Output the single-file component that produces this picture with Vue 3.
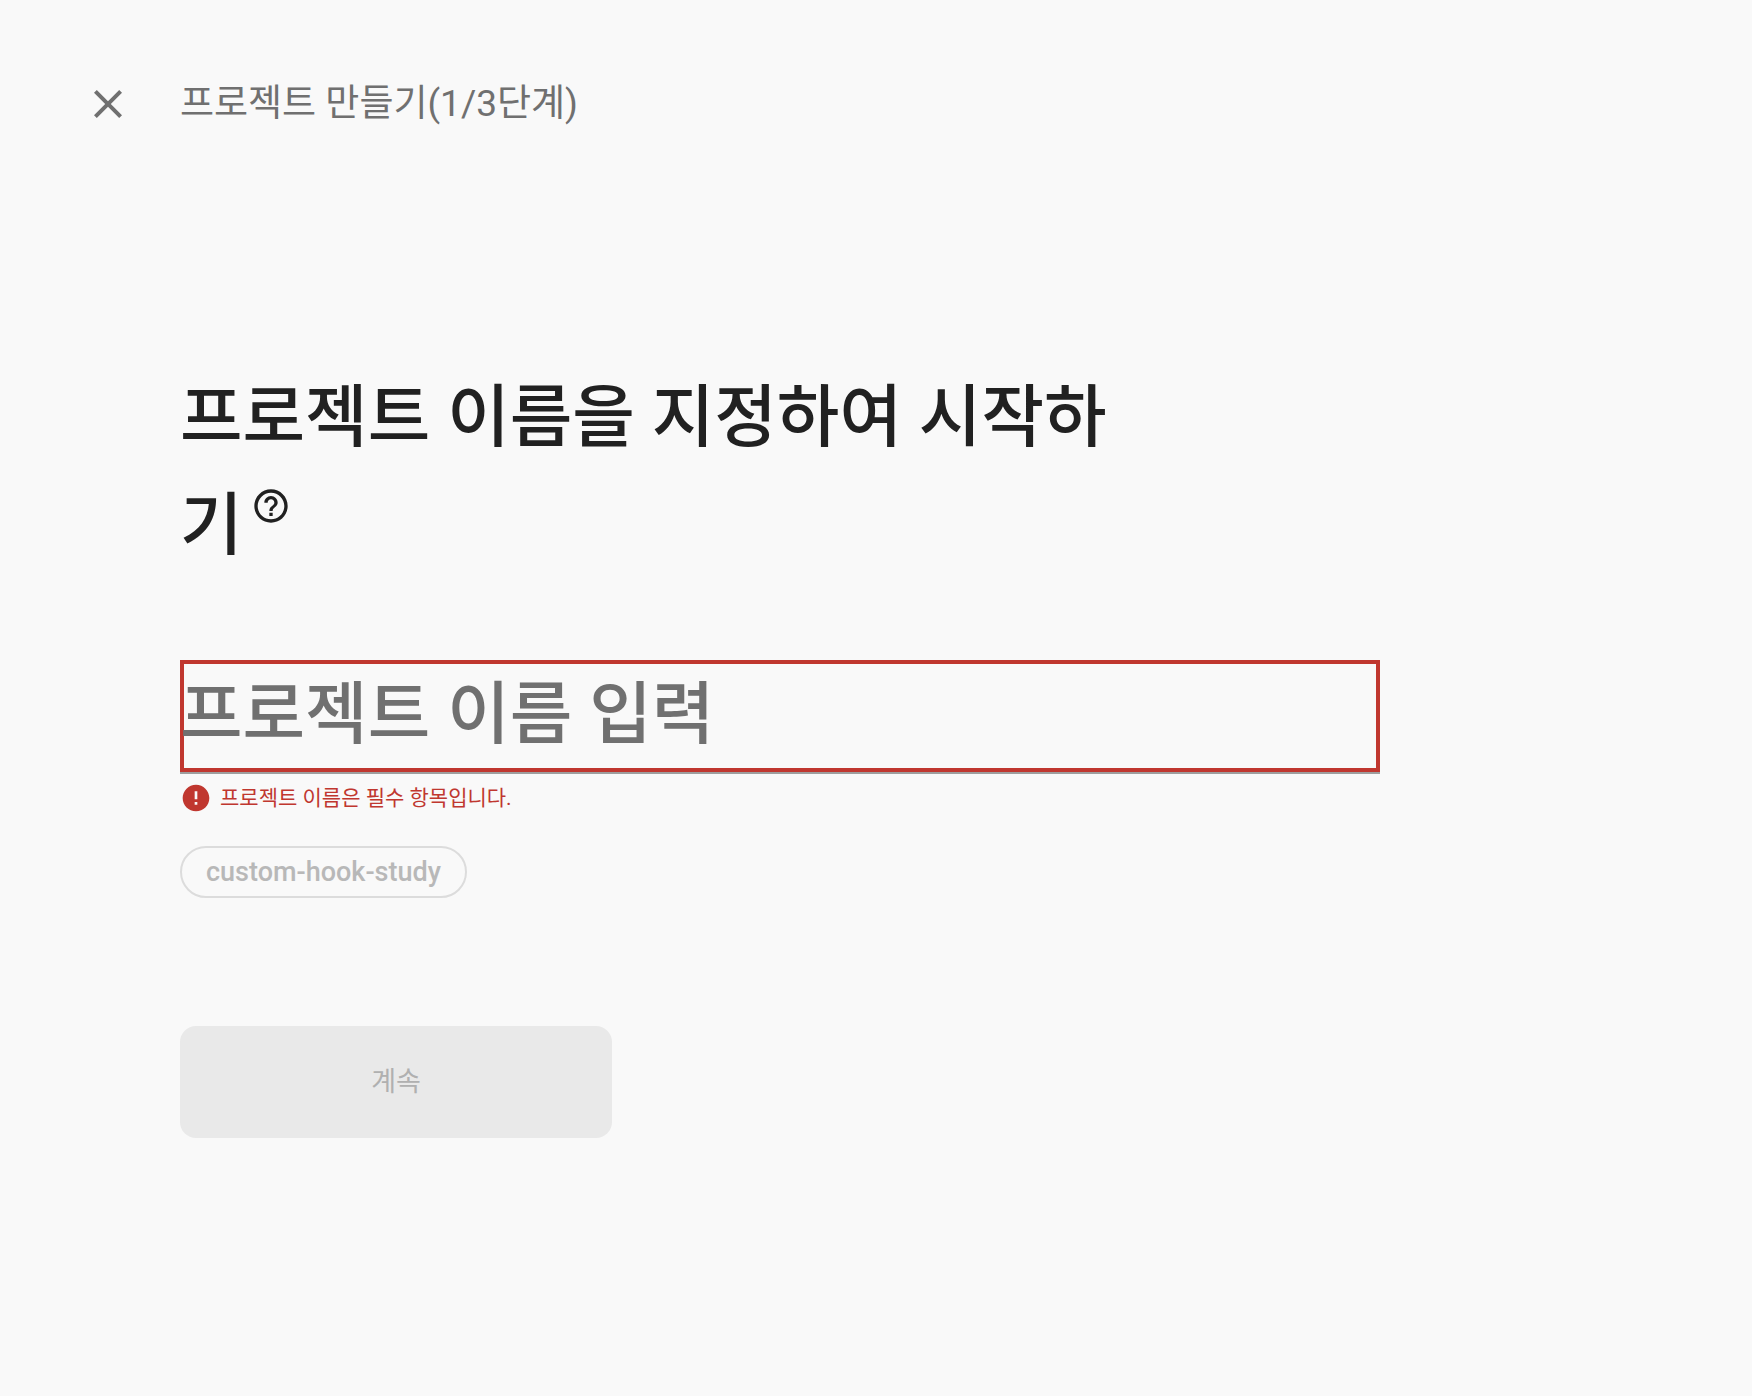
<script setup>
import { ref, computed } from 'vue'

const projectName = ref('')
const step = ref(1)
const totalSteps = 3
const projectId = 'custom-hook-study'

// 이름이 비어 있으면 오류 상태
const hasError = computed(() => projectName.value.trim() === '')
</script>

<template>
  <div class="create-project">
    <header class="top-bar">
      <button class="icon-button" type="button" aria-label="닫기">
        <svg class="close-icon" viewBox="0 0 24 24">
          <path d="M19 6.41L17.59 5 12 10.59 6.41 5 5 6.41 10.59 12 5 17.59 6.41 19 12 13.41 17.59 19 19 17.59 13.41 12z" />
        </svg>
      </button>
      <span class="top-title">프로젝트 만들기({{ step }}/{{ totalSteps }}단계)</span>
    </header>

    <main class="content">
      <h1 class="heading">
        프로젝트 이름을 지정하여 시작하기<button class="help-button" type="button" aria-label="도움말">
          <svg class="help-icon" viewBox="0 0 24 24">
            <path d="M11 18h2v-2h-2v2zm1-16C6.48 2 2 6.48 2 12s4.48 10 10 10 10-4.48 10-10S17.52 2 12 2zm0 18c-4.41 0-8-3.59-8-8s3.59-8 8-8 8 3.59 8 8-3.59 8-8 8zm0-14c-2.21 0-4 1.79-4 4h2c0-1.1.9-2 2-2s2 .9 2 2c0 2-3 1.75-3 5h2c0-2.25 3-2.5 3-5 0-2.21-1.79-4-4-4z" />
          </svg>
        </button>
      </h1>

      <form class="form" @submit.prevent>
        <input
          v-model="projectName"
          class="name-input"
          :class="{ 'has-error': hasError }"
          type="text"
          placeholder="프로젝트 이름 입력"
          aria-label="프로젝트 이름 입력"
          aria-describedby="name-error"
        />
        <p id="name-error" class="error" :class="{ hidden: !hasError }">
          <svg class="error-icon" viewBox="0 0 24 24">
            <path d="M12 2C6.48 2 2 6.48 2 12s4.48 10 10 10 10-4.48 10-10S17.52 2 12 2zm1 15h-2v-2h2v2zm0-4h-2V7h2v6z" />
          </svg>
          <span>프로젝트 이름은 필수 항목입니다.</span>
        </p>
        <button class="id-chip" type="button" disabled>{{ projectId }}</button>
        <button class="submit" type="submit" :disabled="hasError">계속</button>
      </form>
    </main>
  </div>
</template>

<style>
body {
  margin: 0;
  background: #f9f9f9;
}
</style>

<style scoped>
.create-project {
  box-sizing: border-box;
  min-height: 100vh;
  padding: 72px 76px;
  background: #f9f9f9;
  color: #212121;
  font-family: Roboto, 'Noto Sans CJK KR', sans-serif;
}

button {
  padding: 0;
  border: none;
  background: none;
  color: inherit;
  font-family: inherit;
}

svg {
  display: block;
  fill: currentColor;
}

/* 상단 바 */
.top-bar {
  display: flex;
  align-items: center;
  gap: 40px;
  height: 64px;
  color: #707070;
}

.icon-button {
  padding: 8px;
  cursor: pointer;
}

.close-icon {
  width: 48px;
  height: 48px;
}

.top-title {
  font-size: 37px;
  line-height: 64px;
}

/* 본문 */
.content {
  max-width: 1200px;
  margin-left: 104px;
}

.heading {
  max-width: 960px;
  margin: 228px 0 80px;
  font-size: 68px;
  font-weight: 500;
  line-height: 108px;
  word-break: break-all;
}

.help-button {
  margin-left: 8px;
  vertical-align: 23px;
  cursor: pointer;
}

.help-icon {
  width: 40px;
  height: 40px;
}

.form {
  display: flex;
  flex-direction: column;
  align-items: flex-start;
}

.name-input {
  box-sizing: border-box;
  width: 100%;
  height: 114px;
  padding: 0 0 2px;
  border: none;
  border-bottom: 2px solid #9e9e9e;
  border-radius: 0;
  outline: none;
  background: transparent;
  color: #212121;
  font-family: inherit;
  font-size: 68px;
  font-weight: 500;
}

.name-input::placeholder {
  color: #707070;
  opacity: 1;
}

.name-input.has-error {
  box-shadow: inset 0 0 0 4px #c0372f;
}

.error {
  display: flex;
  align-items: center;
  gap: 8px;
  margin: 8px 0 32px;
  color: #c0372f;
  font-size: 21px;
  line-height: 32px;
}

.error.hidden {
  visibility: hidden;
}

.error-icon {
  width: 32px;
  height: 32px;
}

.id-chip {
  height: 52px;
  padding: 0 24px;
  border: 2px solid #dcdcdc;
  border-radius: 26px;
  color: #b8b8b8;
  font-size: 27px;
  font-weight: 500;
}

.submit {
  width: 432px;
  max-width: 100%;
  height: 112px;
  margin-top: 128px;
  padding-bottom: 6px;
  border-radius: 16px;
  background: #1a73e8;
  color: #ffffff;
  font-size: 27px;
  font-weight: 400;
}

.submit:disabled {
  background: #e9e9e9;
  color: #b0b0b0;
}
</style>
